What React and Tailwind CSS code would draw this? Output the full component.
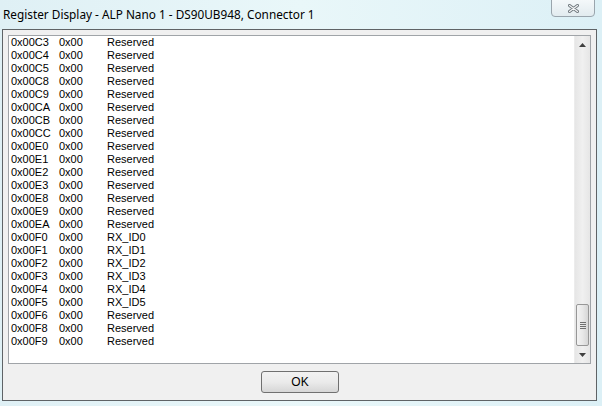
const rows = [
  ['0x00C3', 'Reserved'],
  ['0x00C4', 'Reserved'],
  ['0x00C5', 'Reserved'],
  ['0x00C8', 'Reserved'],
  ['0x00C9', 'Reserved'],
  ['0x00CA', 'Reserved'],
  ['0x00CB', 'Reserved'],
  ['0x00CC', 'Reserved'],
  ['0x00E0', 'Reserved'],
  ['0x00E1', 'Reserved'],
  ['0x00E2', 'Reserved'],
  ['0x00E3', 'Reserved'],
  ['0x00E8', 'Reserved'],
  ['0x00E9', 'Reserved'],
  ['0x00EA', 'Reserved'],
  ['0x00F0', 'RX_ID0'],
  ['0x00F1', 'RX_ID1'],
  ['0x00F2', 'RX_ID2'],
  ['0x00F3', 'RX_ID3'],
  ['0x00F4', 'RX_ID4'],
  ['0x00F5', 'RX_ID5'],
  ['0x00F6', 'Reserved'],
  ['0x00F8', 'Reserved'],
  ['0x00F9', 'Reserved'],
]

export default function App() {
  return (
    <div className="w-[602px] h-[406px] flex flex-col bg-gradient-to-r from-[#dff0f5] via-[#e9f7f9] to-[#dcf0f6] overflow-hidden" style={{ fontFamily: '"Liberation Sans", Arial, sans-serif' }}>
      {/* Title bar */}
      <div className="h-[29px] flex items-start justify-between pl-[3px] pr-[7px]">
        <span className="mt-[6px] text-[11.8px] text-black" style={{ fontFamily: '"Noto Sans", "Open Sans", sans-serif' }}>
          Register Display - ALP Nano 1 - DS90UB948, Connector 1
        </span>
        <div className="w-[44px] h-[18px] -mt-px rounded-b-[4px] border border-[#9aa5ad] bg-gradient-to-b from-[#f4f8fa] to-[#e2ebef] flex items-center justify-center">
          <svg width="11" height="9" viewBox="0 0 11 9">
            <path d="M1.5 1.5 L9.5 7.5 M9.5 1.5 L1.5 7.5" stroke="#6f777d" strokeWidth="3" strokeLinecap="round" />
            <path d="M1.5 1.5 L9.5 7.5 M9.5 1.5 L1.5 7.5" stroke="#f4f6f7" strokeWidth="1.2" strokeLinecap="round" />
          </svg>
        </div>
      </div>

      {/* Client area */}
      <div className="flex-1 ml-[2px] mr-[5px] mb-[5px] border border-[#5f6366] bg-[#f0f0f0] flex flex-col px-[5px] pt-[5px]">
        <div className="h-[329px] border border-[#a0a4a8] bg-white flex">
          <div className="flex-1 pl-[2px]">
            {rows.map(([addr, name]) => (
              <div key={addr} className="h-[13px] flex items-center text-[11px] leading-[13px] text-black">
                <span className="w-[48px]">{addr}</span>
                <span className="w-[48px]">0x00</span>
                <span>{name}</span>
              </div>
            ))}
          </div>
          {/* Scrollbar */}
          <div className="w-[16px] bg-gradient-to-r from-[#e6e6e6] via-[#f0f0f0] to-[#e6e6e6] border-l border-[#ececec] flex flex-col">
            <div className="h-[17px] flex items-center justify-center">
              <svg width="7" height="4" viewBox="0 0 7 4"><path d="M0 4 L3.5 0 L7 4 Z" fill="#404040" /></svg>
            </div>
            <div className="flex-1 flex flex-col justify-end">
              <div className="h-[42px] mx-px rounded-[2px] border border-[#979797] bg-gradient-to-r from-[#f3f3f3] via-[#e8e8e8] to-[#d6d6d6] flex flex-col items-center justify-center gap-px">
                <div className="w-[6px] h-px bg-[#707070]" />
                <div className="w-[6px] h-px bg-[#707070]" />
                <div className="w-[6px] h-px bg-[#707070]" />
                <div className="w-[6px] h-px bg-[#707070]" />
              </div>
            </div>
            <div className="h-[17px] flex items-center justify-center">
              <svg width="7" height="4" viewBox="0 0 7 4"><path d="M0 0 L3.5 4 L7 0 Z" fill="#404040" /></svg>
            </div>
          </div>
        </div>
        <div className="flex justify-center pt-[7px] pl-[1px]">
          <div className="w-[78px] h-[22px] rounded-[3px] border border-[#707070] bg-gradient-to-b from-[#f2f2f2] via-[#ebebeb] to-[#d6d6d6] flex items-center justify-center text-[12px] text-black">
            OK
          </div>
        </div>
      </div>
    </div>
  )
}
